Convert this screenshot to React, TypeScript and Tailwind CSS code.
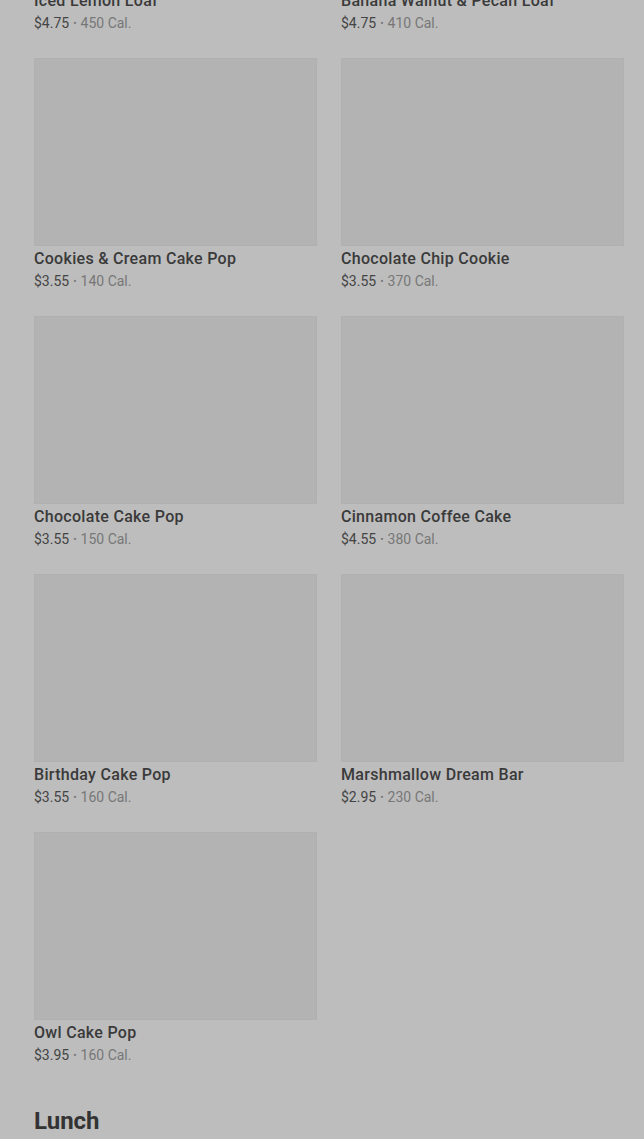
import React from 'react';

type Item = { name: string; price: string; cal: string };

const items: Item[] = [
  { name: 'Iced Lemon Loaf', price: '$4.75', cal: '450' },
  { name: 'Banana Walnut & Pecan Loaf', price: '$4.75', cal: '410' },
  { name: 'Cookies & Cream Cake Pop', price: '$3.55', cal: '140' },
  { name: 'Chocolate Chip Cookie', price: '$3.55', cal: '370' },
  { name: 'Chocolate Cake Pop', price: '$3.55', cal: '150' },
  { name: 'Cinnamon Coffee Cake', price: '$4.55', cal: '380' },
  { name: 'Birthday Cake Pop', price: '$3.55', cal: '160' },
  { name: 'Marshmallow Dream Bar', price: '$2.95', cal: '230' },
  { name: 'Owl Cake Pop', price: '$3.95', cal: '160' },
];

const MenuCard = ({ item }: { item: Item }) => (
  <div className="flex flex-col">
    {/* image placeholder, still loading */}
    <div className="h-[188px] w-full border border-[#b0b0b0] bg-[#b3b3b3]" />
    <div className="flex h-[25px] items-center pt-[1px] text-[16px] font-medium text-[#3a3a3a] tracking-[0.3px]">
      {item.name}
    </div>
    <div className="flex h-[21px] items-center text-[14px] text-[#444]">
      <span>{item.price}</span>
      <span className="mx-[4px] text-[10px] text-[#7a7a7a]">•</span>
      <span className="text-[#777]">{item.cal} Cal.</span>
    </div>
  </div>
);

export default function App() {
  return (
    <div
      className="h-[1139px] overflow-hidden bg-[#bdbdbd]"
      style={{ fontFamily: 'Roboto, "Liberation Sans", sans-serif' }}
    >
      {/* page scrolled: first row of images is out of view */}
      <div className="-mt-[200px] pl-[34px] pr-[20px]">
        <div className="grid grid-cols-2 gap-x-6 gap-y-6">
          {items.map((item) => (
            <MenuCard key={item.name} item={item} />
          ))}
        </div>
        <h2 className="mt-[41px] text-[24px] leading-7 font-bold text-[#333]">Lunch</h2>
      </div>
    </div>
  );
}
